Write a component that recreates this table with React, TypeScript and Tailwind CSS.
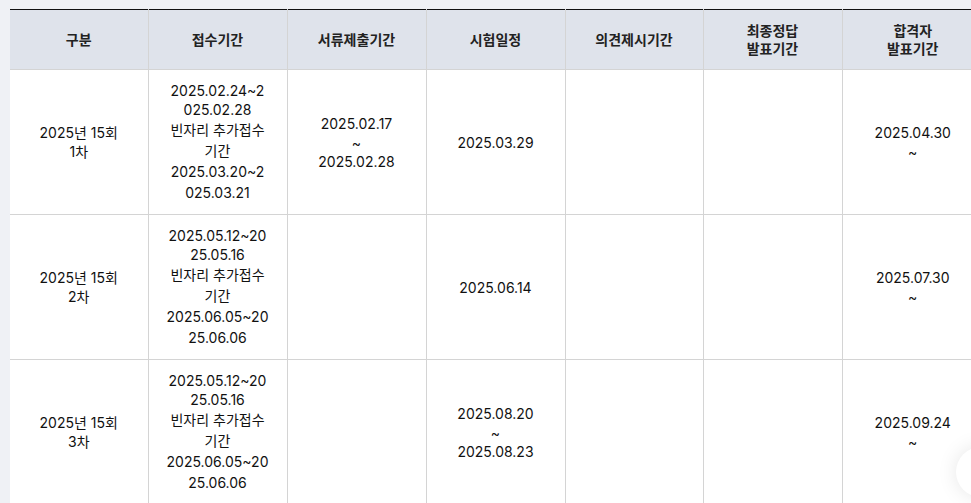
import React from 'react';

type Row = {
  name: string[];
  receipt: string[][];
  docs: string[];
  exam: string[];
  opinion: string[];
  answer: string[];
  pass: string[];
};

const rows: Row[] = [
  {
    name: ['2025년 15회', '1차'],
    receipt: [['2025.02.24~2', '025.02.28'], ['빈자리 추가접수', '기간'], ['2025.03.20~2', '025.03.21']],
    docs: ['2025.02.17', '~', '2025.02.28'],
    exam: ['2025.03.29'],
    opinion: [],
    answer: [],
    pass: ['2025.04.30', '~'],
  },
  {
    name: ['2025년 15회', '2차'],
    receipt: [['2025.05.12~20', '25.05.16'], ['빈자리 추가접수', '기간'], ['2025.06.05~20', '25.06.06']],
    docs: [],
    exam: ['2025.06.14'],
    opinion: [],
    answer: [],
    pass: ['2025.07.30', '~'],
  },
  {
    name: ['2025년 15회', '3차'],
    receipt: [['2025.05.12~20', '25.05.16'], ['빈자리 추가접수', '기간'], ['2025.06.05~20', '25.06.06']],
    docs: [],
    exam: ['2025.08.20', '~', '2025.08.23'],
    opinion: [],
    answer: [],
    pass: ['2025.09.24', '~'],
  },
];

const headers = [['구분'], ['접수기간'], ['서류제출기간'], ['시험일정'], ['의견제시기간'], ['최종정답', '발표기간'], ['합격자', '발표기간']];

const Lines: React.FC<{ lines: string[] }> = ({ lines }) => (
  <>
    {lines.map((l, i) => (
      <div key={i} className="leading-[19px]">{l}</div>
    ))}
  </>
);

const Cell: React.FC<{ children?: React.ReactNode; last?: boolean }> = ({ children, last }) => (
  <td className={`h-[145px] px-4 text-center align-middle border-b border-[#d4d4d4] ${last ? '' : 'border-r'}`}>
    {children}
  </td>
);

export default function App() {
  return (
    <div
      className="relative w-[971px] h-[503px] overflow-hidden bg-[#eff1f5] pl-[10px] pt-[9px] text-[14px] text-[#111]"
      style={{ fontFamily: 'Inter, "Noto Sans CJK KR", sans-serif' }}
    >
      <table className="w-[973px] table-fixed border-collapse border-t border-[#111] bg-white">
        <colgroup>
          <col className="w-[138px]" />
          <col className="w-[139px]" />
          <col className="w-[139px]" />
          <col className="w-[139px]" />
          <col className="w-[138px]" />
          <col className="w-[139px]" />
          <col className="w-[141px]" />
        </colgroup>
        <thead>
          <tr className="bg-[#dfe3eb]">
            {headers.map((h, i) => (
              <th
                key={i}
                className={`h-[60px] px-2 text-center align-middle font-bold text-[#222] border-b border-[#d4d4d4] ${i < headers.length - 1 ? 'border-r' : ''}`}
              >
                {h.map((l, j) => (
                  <div key={j} className="leading-[18px]">{l}</div>
                ))}
              </th>
            ))}
          </tr>
        </thead>
        <tbody>
          {rows.map((r, i) => (
            <tr key={i}>
              <Cell><Lines lines={r.name} /></Cell>
              <Cell>
                {r.receipt.map((g, j) => (
                  <div key={j}>
                    {g.map((l, k) => (
                      <div key={k} className={j === 0 ? 'leading-[19px]' : 'leading-[21px]'}>{l}</div>
                    ))}
                  </div>
                ))}
              </Cell>
              <Cell><Lines lines={r.docs} /></Cell>
              <Cell><Lines lines={r.exam} /></Cell>
              <Cell><Lines lines={r.opinion} /></Cell>
              <Cell><Lines lines={r.answer} /></Cell>
              <Cell last><Lines lines={r.pass} /></Cell>
            </tr>
          ))}
        </tbody>
      </table>

      {/* floating button, partly off screen */}
      <div className="absolute left-[956px] top-[447px] w-[50px] h-[50px] rounded-full bg-white shadow-[0_0_20px_rgba(0,0,0,0.1)]" />
    </div>
  );
}
